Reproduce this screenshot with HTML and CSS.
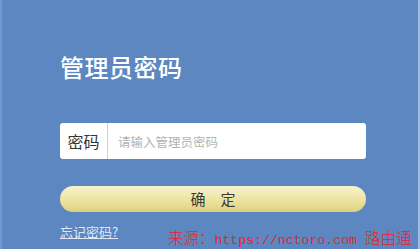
FILE: index.html
```html
<!DOCTYPE html>
<html lang="zh-CN">
<head>
<meta charset="utf-8">
<title>管理员密码</title>
<link rel="stylesheet" href="styles.css">
</head>
<body>
<div class="page">
  <div class="panel">
    <h1 class="title">管理员密码</h1>
    <div class="field">
      <label class="label" for="pwd">密码</label>
      <input class="input" id="pwd" type="password" placeholder="请输入管理员密码">
    </div>
    <button class="btn" type="button">确　定</button>
    <a class="forgot" href="#">忘记密码?</a>
  </div>
  <div class="watermark">来源：<span class="ascii">https://nctoro.com </span>路由通</div>
</div>
</body>
</html>
```

FILE: styles.css
```css
html, body {
  margin: 0;
  padding: 0;
}
body {
  width: 420px;
  height: 249px;
  overflow: hidden;
  background: #5c87c0;
  font-family: "Noto Sans CJK SC", "Noto Sans", sans-serif;
}
.page {
  position: relative;
  box-sizing: border-box;
  width: 420px;
  height: 249px;
  border-left: 2px solid #7398cf;
  border-right: 2px solid #a3bce4;
  background: #5c87c0;
}
.panel {
  display: flex;
  flex-direction: column;
  align-items: flex-start;
  padding: 55px 0 0 58px;
  width: 306px;
}
.title {
  margin: 0;
  font-size: 24px;
  line-height: 24px;
  font-weight: 500;
  color: #ffffff;
  letter-spacing: 0.5px;
}
.field {
  display: flex;
  align-items: stretch;
  width: 306px;
  height: 36px;
  margin-top: 44px;
  background: #ffffff;
  border-radius: 3px;
  overflow: hidden;
}
.label {
  display: flex;
  align-items: center;
  justify-content: center;
  width: 47px;
  font-size: 16px;
  color: #333333;
  border-right: 1px solid #c5d3e8;
}
.input {
  flex: 1;
  border: 0;
  outline: 0;
  padding: 0 0 0 10px;
  font-family: "Noto Sans CJK SC", sans-serif;
  font-size: 12.5px;
  color: #333;
  background: transparent;
}
.input::placeholder {
  color: #b3b3b3;
}
.btn {
  width: 306px;
  height: 26px;
  margin-top: 27px;
  padding: 0;
  border: 0;
  border-radius: 13px;
  background: linear-gradient(to bottom, #f7f3cf 0%, #ece39f 55%, #ddd07f 100%);
  font-family: "Noto Sans CJK SC", sans-serif;
  font-size: 15px;
  line-height: 26px;
  color: #3a3a3a;
  cursor: pointer;
}
.forgot {
  margin-top: 13px;
  font-size: 13px;
  line-height: 14px;
  color: #dfe7f4;
  text-decoration: underline;
}
.watermark {
  position: absolute;
  left: 166px;
  top: 229px;
  white-space: nowrap;
  font-family: "Noto Sans CJK SC", serif;
  font-size: 15.5px;
  line-height: 16px;
  font-weight: 300;
  color: #e3262b;
}
.watermark .ascii {
  font-family: "Liberation Mono", monospace;
  font-size: 13.2px;
}
```
